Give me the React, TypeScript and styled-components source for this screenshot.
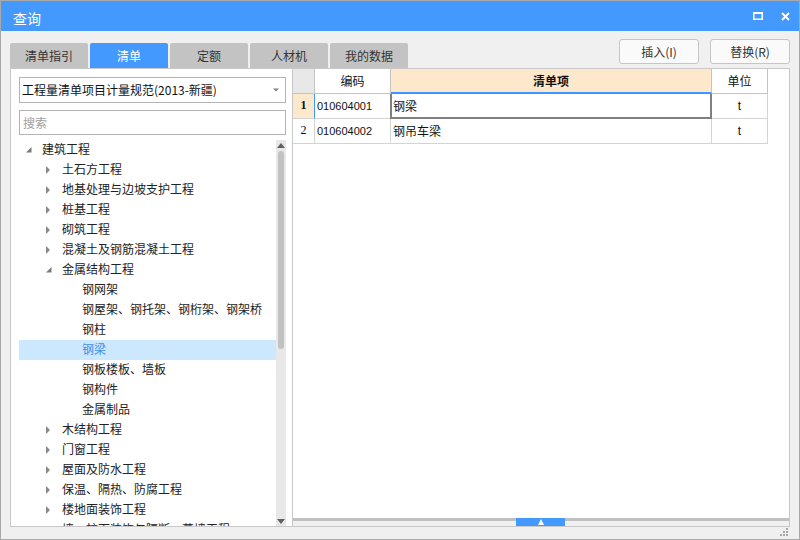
import React from "react";
import styled, { createGlobalStyle, css } from "styled-components";

const GlobalStyle = createGlobalStyle`
  html, body { margin: 0; padding: 0; background: #ffffff; }
  body { font-family: "Noto Sans CJK SC", "Noto Sans", sans-serif; }
  * { box-sizing: border-box; }
`;

const Window = styled.div`
  width: 800px;
  height: 540px;
  border: 1px solid #a9a9a9;
  background: #f0f0f0;
  display: flex;
  flex-direction: column;
  overflow: hidden;
`;

const TitleBar = styled.div`
  height: 30px;
  flex: none;
  background: #4499ff;
  display: flex;
  align-items: center;
  padding: 3px 9px 0 12px;
  color: #ffffff;
`;

const TitleText = styled.span`
  font-size: 14px;
  line-height: 16px;
`;

const WinControls = styled.div`
  margin-left: auto;
  display: flex;
  align-items: center;
  gap: 18px;
  margin-top: -3px;
`;

const Content = styled.div`
  flex: 1;
  display: flex;
  flex-direction: column;
  padding: 0 9px 0 9px;
`;

const Toolbar = styled.div`
  height: 37px;
  flex: none;
  display: flex;
`;

const Tabs = styled.div`
  display: flex;
  gap: 2px;
  align-self: flex-end;
`;

const Tab = styled.div<{ $active?: boolean }>`
  width: 78px;
  height: 25px;
  border-radius: 2px 2px 0 0;
  display: flex;
  align-items: center;
  justify-content: center;
  padding-bottom: 1px;
  font-size: 12px;
  color: ${(p) => (p.$active ? "#ffffff" : "#333333")};
  background: ${(p) => (p.$active ? "#4499ff" : "#c3c3c3")};
`;

const Buttons = styled.div`
  margin-left: auto;
  display: flex;
  gap: 11px;
  padding-top: 8px;
`;

const Button = styled.div`
  width: 80px;
  height: 25px;
  border: 1px solid #c6c6c6;
  border-radius: 3px;
  background: #fafafa;
  display: flex;
  align-items: center;
  justify-content: center;
  font-size: 12px;
  color: #333333;
`;

const Main = styled.div`
  height: 459px;
  flex: none;
  display: flex;
`;

const LeftPanel = styled.div`
  width: 282px;
  flex: none;
  background: #ffffff;
  border: 1px solid #c8c8c8;
  border-right: none;
  padding: 8px 6px 0 8px;
  display: flex;
  flex-direction: column;
  overflow: hidden;
`;

const Select = styled.div`
  height: 26px;
  flex: none;
  border: 1px solid #b4b4b4;
  display: flex;
  align-items: center;
  padding: 0 6px 1px 2px;
  font-size: 12px;
  color: #111111;
`;

const SelectText = styled.span`
  flex: 1;
`;

const Search = styled.div`
  height: 25px;
  flex: none;
  margin-top: 7px;
  border: 1px solid #b4b4b4;
  display: flex;
  align-items: center;
  padding: 0 0 1px 3px;
  font-size: 12px;
  color: #a0a0a0;
`;

const TreeWrap = styled.div`
  flex: 1;
  margin-top: 5px;
  display: flex;
  overflow: hidden;
  min-height: 0;
`;

const TreeList = styled.div`
  flex: 1;
  overflow: hidden;
`;

const TreeRow = styled.div<{ $level: number; $selected?: boolean }>`
  height: 20px;
  display: flex;
  align-items: center;
  padding-left: ${(p) => 7 + p.$level * 20}px;
  font-size: 12px;
  line-height: 18px;
  white-space: nowrap;
  color: ${(p) => (p.$selected ? "#3a8ee6" : "#222222")};
  background: ${(p) => (p.$selected ? "#cce8ff" : "transparent")};
`;

const Label = styled.span`
  margin-top: -2px;
`;

const ArrowBox = styled.span`
  width: 16px;
  height: 20px;
  flex: none;
  display: flex;
  align-self: flex-start;
`;

const VScroll = styled.div`
  width: 10px;
  flex: none;
  background: #e8e8e8;
  display: flex;
  flex-direction: column;
  align-items: center;
`;

const ScrollArrow = styled.div`
  height: 10px;
  flex: none;
  display: flex;
  align-items: center;
  justify-content: center;
`;

const VThumb = styled.div`
  width: 6px;
  height: 198px;
  border-radius: 3px;
  background: #c2c2c2;
  margin-top: 1px;
`;

const Spacer = styled.div`
  flex: 1;
`;

const RightPanel = styled.div`
  flex: 1;
  background: #ffffff;
  border: 1px solid #c8c8c8;
  display: flex;
  flex-direction: column;
  overflow: hidden;
`;

const Grid = styled.div`
  display: grid;
  grid-template-columns: 22px 76px 321px 56px;
  grid-auto-rows: 25px;
  width: max-content;
`;

type CellKind = "corner" | "head" | "headCur" | "num" | "numCur" | "text" | "sel" | "center";

const Cell = styled.div<{ $kind: CellKind }>`
  position: relative;
  border-right: 1px solid #d4d4d4;
  border-bottom: 1px solid #d4d4d4;
  display: flex;
  align-items: center;
  font-size: 12px;
  color: #111111;
  white-space: nowrap;
  padding-left: 2px;
  padding-bottom: 1px;
  ${(p) =>
    (p.$kind === "corner" || p.$kind === "head" || p.$kind === "headCur") &&
    css`
      justify-content: center;
      padding-left: 0;
      border-color: #c4c4c4;
    `}
  ${(p) => p.$kind === "corner" && css`background: #e8e8e8;`}
  ${(p) =>
    p.$kind === "headCur" &&
    css`
      background: #fde8cc;
      font-weight: bold;
      border-bottom: 2px solid #3d95ff;
    `}
  ${(p) =>
    (p.$kind === "num" || p.$kind === "numCur") &&
    css`
      justify-content: center;
      padding-left: 0;
      font-family: "Liberation Serif", serif;
      font-size: 12px;
    `}
  ${(p) =>
    p.$kind === "numCur" &&
    css`
      background: #fde8cc;
      font-weight: bold;
      border-right: 1px solid #3d95ff;
    `}
  ${(p) => p.$kind === "center" && css`justify-content: center; padding-left: 0;`}
  ${(p) =>
    p.$kind === "sel" &&
    css`
      &::after {
        content: "";
        position: absolute;
        left: -1px;
        top: 0;
        right: -1px;
        bottom: -1px;
        border: 2px solid #808080;
        border-top: none;
      }
    `}
`;

const Code = styled.span`
  font-family: "Liberation Sans", Arial, sans-serif;
  font-size: 11px;
`;

const Unit = styled.span`
  font-family: "Liberation Sans", Arial, sans-serif;
  font-size: 12px;
`;

const HScroll = styled.div`
  margin-top: auto;
  height: 8px;
  flex: none;
  border-top: 3px solid #c0c0c0;
  background: #f0f0f0;
  display: flex;
  justify-content: center;
  position: relative;
`;

const HHandle = styled.div`
  position: absolute;
  top: -3px;
  left: 50%;
  margin-left: -25px;
  width: 49px;
  height: 8px;
  background: #4499ff;
  display: flex;
  align-items: center;
  justify-content: center;
`;

const Footer = styled.div`
  flex: 1;
  display: flex;
  justify-content: flex-end;
  align-items: flex-end;
  padding: 0 1px 2px 0;
`;

const tree: { label: string; level: number; state?: "open" | "closed"; selected?: boolean }[] = [
  { label: "建筑工程", level: 0, state: "open" },
  { label: "土石方工程", level: 1, state: "closed" },
  { label: "地基处理与边坡支护工程", level: 1, state: "closed" },
  { label: "桩基工程", level: 1, state: "closed" },
  { label: "砌筑工程", level: 1, state: "closed" },
  { label: "混凝土及钢筋混凝土工程", level: 1, state: "closed" },
  { label: "金属结构工程", level: 1, state: "open" },
  { label: "钢网架", level: 2 },
  { label: "钢屋架、钢托架、钢桁架、钢架桥", level: 2 },
  { label: "钢柱", level: 2 },
  { label: "钢梁", level: 2, selected: true },
  { label: "钢板楼板、墙板", level: 2 },
  { label: "钢构件", level: 2 },
  { label: "金属制品", level: 2 },
  { label: "木结构工程", level: 1, state: "closed" },
  { label: "门窗工程", level: 1, state: "closed" },
  { label: "屋面及防水工程", level: 1, state: "closed" },
  { label: "保温、隔热、防腐工程", level: 1, state: "closed" },
  { label: "楼地面装饰工程", level: 1, state: "closed" },
  { label: "墙、柱面装饰与隔断、幕墙工程", level: 1, state: "closed" },
];

const Arrow = ({ state }: { state?: "open" | "closed" }) => (
  <ArrowBox>
    {state && (
      <svg width="16" height="20" viewBox="0 0 16 20">
        {state === "closed" ? (
          <polygon points="0,6 4,10 0,14" fill="#8a8a8a" />
        ) : (
          <polygon points="5.5,7 5.5,12.5 0,12.5" fill="#7a7a7a" />
        )}
      </svg>
    )}
  </ArrowBox>
);

export default function App() {
  return (
    <>
      <GlobalStyle />
      <Window>
        <TitleBar>
          <TitleText>查询</TitleText>
          <WinControls>
            <svg width="10" height="8" viewBox="0 0 10 8">
              <rect x="0.75" y="1" width="8.5" height="6.25" fill="none" stroke="#fff" strokeWidth="1.5" />
              <rect x="0" y="0" width="10" height="2" fill="#fff" />
            </svg>
            <svg width="9" height="9" viewBox="0 0 9 9">
              <path d="M1 1 L8 8 M8 1 L1 8" stroke="#fff" strokeWidth="2" />
            </svg>
          </WinControls>
        </TitleBar>
        <Content>
          <Toolbar>
            <Tabs>
              <Tab>清单指引</Tab>
              <Tab $active>清单</Tab>
              <Tab>定额</Tab>
              <Tab>人材机</Tab>
              <Tab>我的数据</Tab>
            </Tabs>
            <Buttons>
              <Button>插入(I)</Button>
              <Button>替换(R)</Button>
            </Buttons>
          </Toolbar>
          <Main>
            <LeftPanel>
              <Select>
                <SelectText>工程量清单项目计量规范(2013-新疆)</SelectText>
                <svg width="6" height="4" viewBox="0 0 6 4">
                  <polygon points="0,0.5 6,0.5 3,3.5" fill="#808080" />
                </svg>
              </Select>
              <Search>搜索</Search>
              <TreeWrap>
                <TreeList>
                  {tree.map((n) => (
                    <TreeRow key={n.label} $level={n.level} $selected={n.selected}>
                      <Arrow state={n.state} />
                      <Label>{n.label}</Label>
                    </TreeRow>
                  ))}
                </TreeList>
                <VScroll>
                  <ScrollArrow>
                    <svg width="8" height="5" viewBox="0 0 8 5">
                      <polygon points="4,0 8,5 0,5" fill="#606060" />
                    </svg>
                  </ScrollArrow>
                  <VThumb />
                  <Spacer />
                  <ScrollArrow>
                    <svg width="8" height="5" viewBox="0 0 8 5">
                      <polygon points="0,0 8,0 4,5" fill="#606060" />
                    </svg>
                  </ScrollArrow>
                </VScroll>
              </TreeWrap>
            </LeftPanel>
            <RightPanel>
              <Grid>
                <Cell $kind="corner" />
                <Cell $kind="head">编码</Cell>
                <Cell $kind="headCur">清单项</Cell>
                <Cell $kind="head">单位</Cell>

                <Cell $kind="numCur">1</Cell>
                <Cell $kind="text"><Code>010604001</Code></Cell>
                <Cell $kind="sel">钢梁</Cell>
                <Cell $kind="center"><Unit>t</Unit></Cell>

                <Cell $kind="num">2</Cell>
                <Cell $kind="text"><Code>010604002</Code></Cell>
                <Cell $kind="text">钢吊车梁</Cell>
                <Cell $kind="center"><Unit>t</Unit></Cell>
              </Grid>
              <HScroll>
                <HHandle>
                  <svg width="6" height="6" viewBox="0 0 6 6">
                    <polygon points="3,0 6,6 0,6" fill="#fff" />
                  </svg>
                </HHandle>
              </HScroll>
            </RightPanel>
          </Main>
          <Footer>
            <svg width="9" height="9" viewBox="0 0 9 9">
              <rect x="6" y="0" width="2" height="2" fill="#a8a8a8" />
              <rect x="3" y="3" width="2" height="2" fill="#a8a8a8" />
              <rect x="6" y="3" width="2" height="2" fill="#a8a8a8" />
              <rect x="0" y="6" width="2" height="2" fill="#a8a8a8" />
              <rect x="3" y="6" width="2" height="2" fill="#a8a8a8" />
              <rect x="6" y="6" width="2" height="2" fill="#a8a8a8" />
            </svg>
          </Footer>
        </Content>
      </Window>
    </>
  );
}
